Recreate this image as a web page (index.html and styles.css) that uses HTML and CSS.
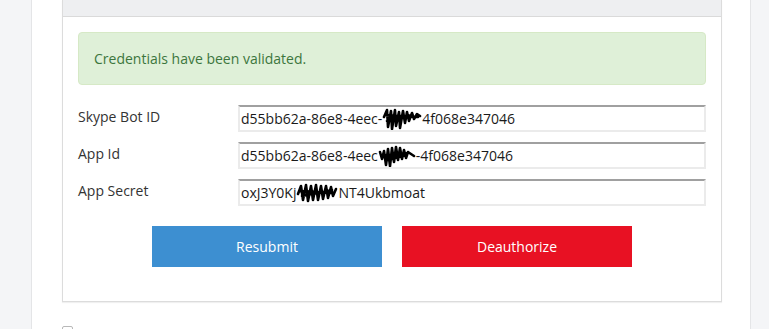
FILE: index.html
```html
<!DOCTYPE html>
<html lang="en">
<head>
  <meta charset="UTF-8">
  <meta name="viewport" content="width=device-width, initial-scale=1.0">
  <title>Skype Bot Credentials</title>
  <link rel="stylesheet" href="styles.css">
</head>
<body>
  <div class="page">
    <div class="panel">
      <div class="panel-heading"></div>
      <div class="panel-body">
        <div class="alert">Credentials have been validated.</div>
        <form class="cred-form">
          <div class="row">
            <label>Skype Bot ID</label>
            <div class="field">d55bb62a-86e8-4eec-<svg class="scribble" width="40" height="24" viewBox="0 0 40 24"><path d="M2 10 L5 3 L6 20 L9 4 L10 22 L13 3 L14 19 L17 5 L18 21 L21 4 L23 16 L25 5 L27 14 L30 6 L32 12 L35 7 L38 9 M4 8 L36 10 M5 14 L30 8" /></svg>4f068e347046</div>
          </div>
          <div class="row">
            <label>App Id</label>
            <div class="field">d55bb62a-86e8-4eec<svg class="scribble" width="38" height="24" viewBox="0 0 38 24"><path d="M2 8 L4 15 L6 7 L8 21 L10 5 L12 22 L14 4 L16 18 L18 3 L20 16 L22 4 L24 15 L26 6 L28 14 L30 8 L36 12 M6 12 L30 9 M10 16 L28 11" /></svg>-4f068e347046</div>
          </div>
          <div class="row">
            <label>App Secret</label>
            <div class="field">oxJ3Y0Kj<svg class="scribble" width="42" height="22" viewBox="0 0 42 22"><path d="M2 12 L5 4 L7 18 L10 3 L12 19 L15 4 L17 18 L20 3 L22 18 L25 4 L27 17 L30 4 L32 16 L35 5 L37 14 L40 7 M4 9 L38 11 M6 14 L36 8" /></svg>NT4Ukbmoat</div>
          </div>
          <div class="actions">
            <button type="button" class="btn btn-blue">Resubmit</button>
            <button type="button" class="btn btn-red">Deauthorize</button>
          </div>
        </form>
      </div>
    </div>
    <div class="check-row">
      <span class="check"></span>
    </div>
  </div>
</body>
</html>
```

FILE: styles.css
```css
body {
  margin: 0;
  background-color: #f4f5f7;
  font-family: "Open Sans", "Noto Sans", sans-serif;
  font-size: 14px;
  color: #333;
}
.page {
  margin-left: 31px;
  width: 720px;
  height: 329px;
  overflow: hidden;
  background-color: #fff;
  border-left: 1px solid #e4e5e7;
  border-right: 1px solid #e4e5e7;
  padding: 0 30px;
  box-sizing: border-box;
}
.panel {
  width: 660px;
  border: 1px solid #dcdcdc;
  border-top: none;
  box-shadow: 0 1px 1px rgba(0, 0, 0, 0.06);
  box-sizing: border-box;
}
.panel-heading {
  height: 16px;
  background-color: #eeeff1;
  border-bottom: 1px solid #dadada;
}
.panel-body {
  padding: 15px 15px 34px;
}
.alert {
  background-color: #dff0d8;
  border: 1px solid #d6e9c6;
  border-radius: 4px;
  color: #3c763d;
  padding: 16px 15px 15px;
  line-height: 20px;
}
.cred-form {
  margin-top: 20px;
}
.row {
  display: flex;
  align-items: center;
  margin-bottom: 10px;
}
.row label {
  width: 160px;
  margin-top: -4px;
}
.field {
  flex: 1;
  height: 27px;
  line-height: 23px;
  border: 2px solid #ebebeb;
  border-top-color: #a0a0a0;
  padding-left: 1px;
  box-sizing: border-box;
  color: #1a1a1a;
  white-space: nowrap;
  overflow: hidden;
}
.scribble {
  vertical-align: middle;
  margin-top: -3px;
}
.scribble path {
  fill: none;
  stroke: #000;
  stroke-width: 2.6;
  stroke-linecap: round;
  stroke-linejoin: round;
}
.actions {
  display: flex;
  justify-content: center;
  gap: 20px;
  margin-top: 20px;
}
.btn {
  width: 230px;
  height: 41px;
  border: none;
  color: #fff;
  font-family: "Open Sans", "Noto Sans", sans-serif;
  font-size: 14px;
  cursor: pointer;
}
.btn-blue {
  background-color: #3d8fd1;
}
.btn-red {
  background-color: #e81123;
}
.check-row {
  padding-top: 24px;
  line-height: 0;
}
.check {
  display: inline-block;
  width: 9px;
  height: 9px;
  border: 1px solid #b8b8b8;
  border-radius: 2px;
  background-color: #fff;
}
```
